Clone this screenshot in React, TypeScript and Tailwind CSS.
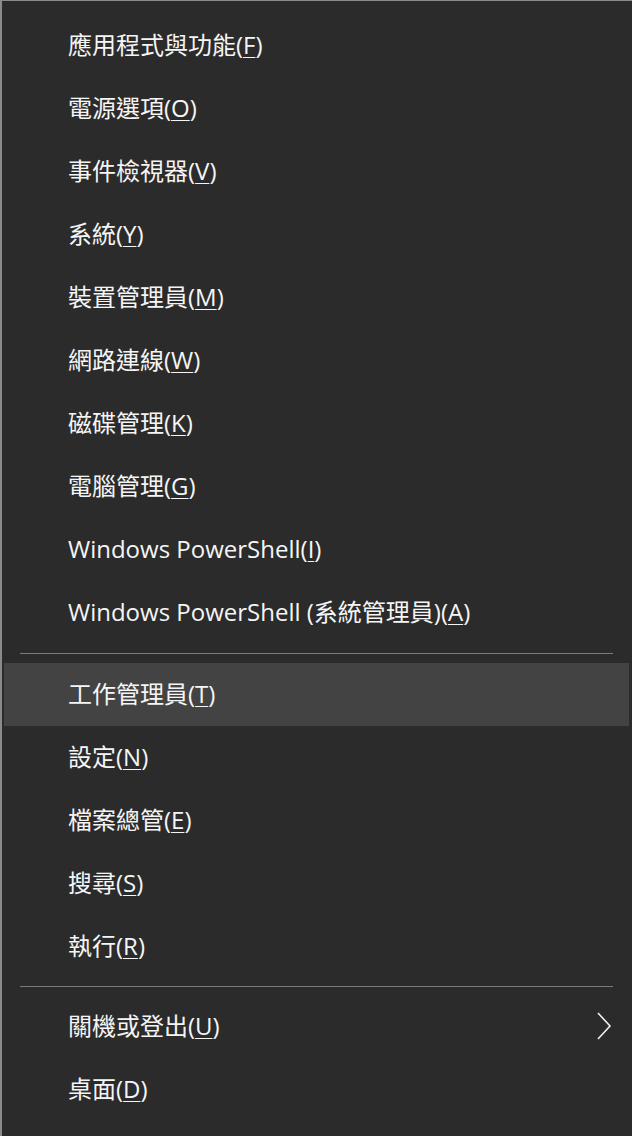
type Item = { label: string; accel: string; active?: boolean; sub?: boolean };

const groups: Item[][] = [
  [
    { label: "應用程式與功能", accel: "F" },
    { label: "電源選項", accel: "O" },
    { label: "事件檢視器", accel: "V" },
    { label: "系統", accel: "Y" },
    { label: "裝置管理員", accel: "M" },
    { label: "網路連線", accel: "W" },
    { label: "磁碟管理", accel: "K" },
    { label: "電腦管理", accel: "G" },
    { label: "Windows PowerShell", accel: "I" },
    { label: "Windows PowerShell (系統管理員)", accel: "A" },
  ],
  [
    { label: "工作管理員", accel: "T", active: true },
    { label: "設定", accel: "N" },
    { label: "檔案總管", accel: "E" },
    { label: "搜尋", accel: "S" },
    { label: "執行", accel: "R" },
  ],
  [
    { label: "關機或登出", accel: "U", sub: true },
    { label: "桌面", accel: "D" },
  ],
];

function Row({ label, accel, active, sub }: Item) {
  return (
    <div
      className={`flex items-center h-[63px] pl-[64px] pr-[16px] pb-[2px] ${active ? "bg-[#434343]" : ""}`}
    >
      <span className="flex-1 text-[24px] leading-none text-[#f5f5f5] whitespace-nowrap">
        {label}(<span className="underline underline-offset-[3px] decoration-1">{accel}</span>)
      </span>
      {sub && (
        <svg width="18" height="30" viewBox="0 0 18 30">
          <path d="M3 2 L15 15 L3 28" fill="none" stroke="#f0f0f0" strokeWidth="1.6" />
        </svg>
      )}
    </div>
  );
}

export default function App() {
  return (
    <div
      className="w-[632px] h-[1136px] bg-[#2b2b2b] border-l-2 border-t border-[#8a8a8a] pt-[13px] pl-[2px] pr-[3px] overflow-hidden"
      style={{ fontFamily: '"Open Sans", "Noto Sans CJK TC", sans-serif' }}
    >
      {groups.map((g, i) => (
        <div key={i}>
          {i === 1 && <div className="mx-[16px] my-[9px] h-px bg-[#7a7a7a]" />}
          {i === 2 && <div className="mx-[16px] my-[8px] h-px bg-[#7a7a7a]" />}
          {g.map((r) => (
            <Row key={r.label} {...r} />
          ))}
        </div>
      ))}
    </div>
  );
}
